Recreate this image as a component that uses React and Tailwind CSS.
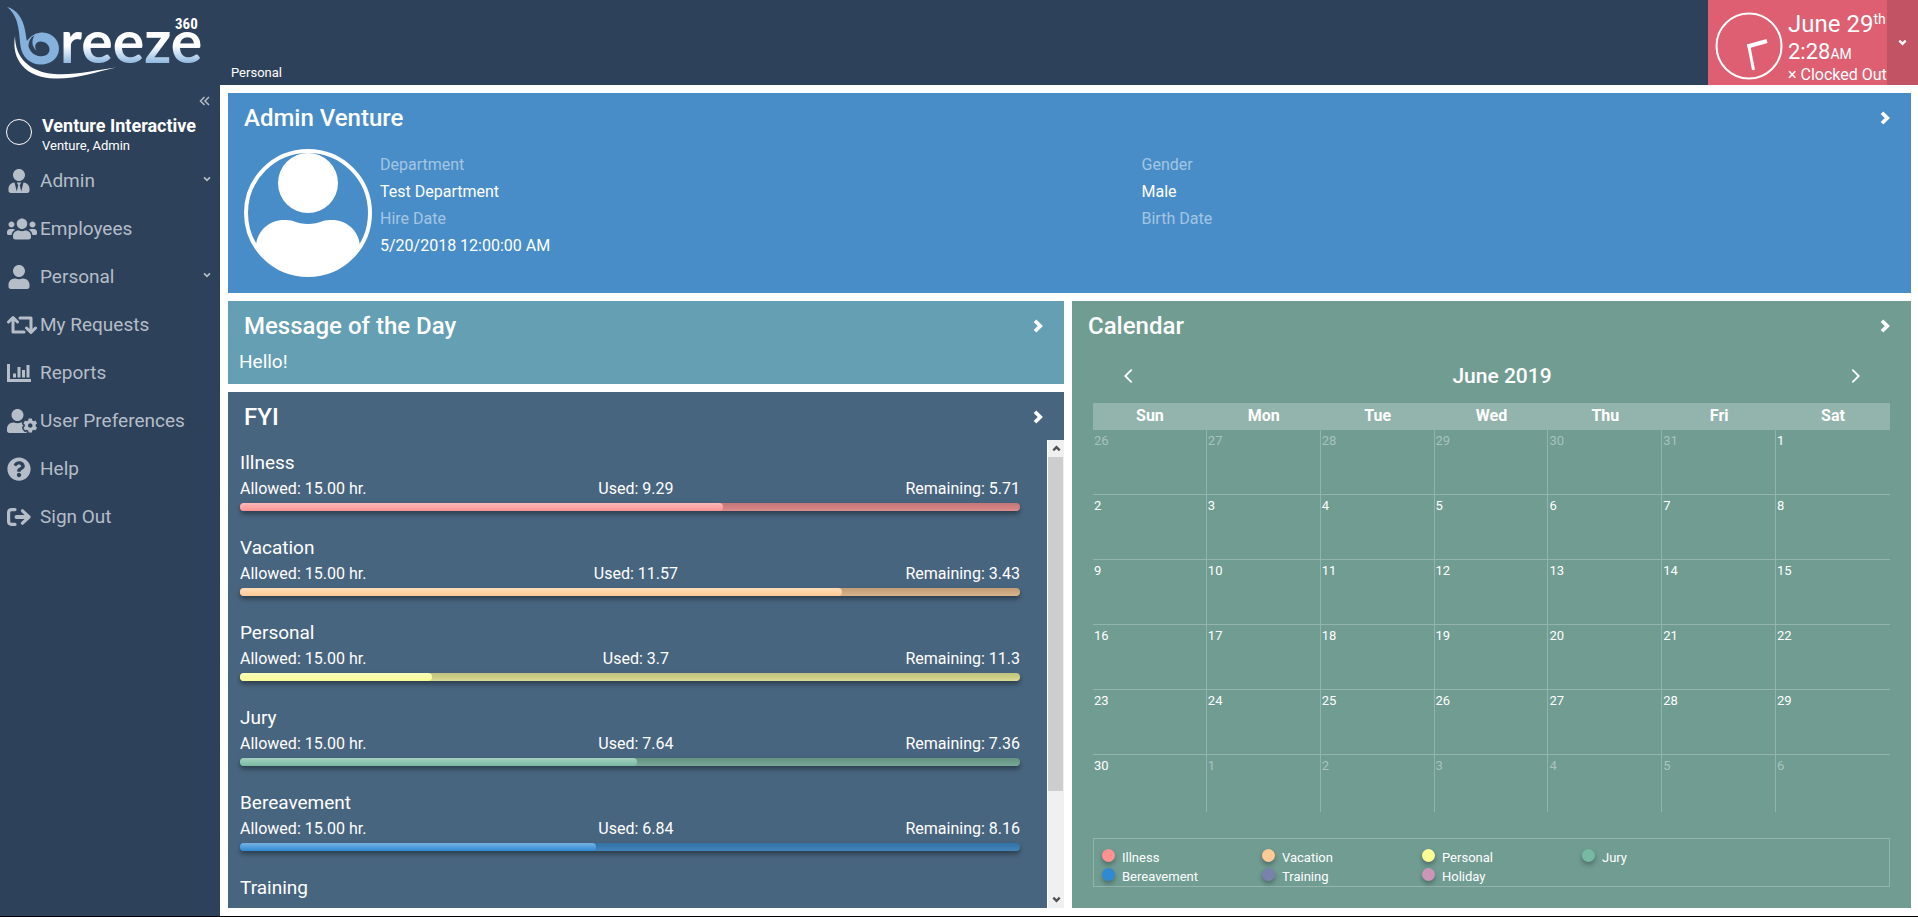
import React from "react";
import { FaUserTie, FaUsers, FaUser, FaUserCog, FaQuestionCircle } from "react-icons/fa";

function Chevron({ dir = "right", className, width = 3 }) {
  const d = {
    right: "M8 5 L15 12 L8 19",
    left: "M16 5 L9 12 L16 19",
    down: "M5 8 L12 15 L19 8",
    up: "M5 16 L12 9 L19 16",
  }[dir];
  return (
    <svg viewBox="0 0 24 24" className={className} fill="none" stroke="currentColor" strokeWidth={width} aria-hidden="true">
      <path d={d} />
    </svg>
  );
}

function RequestsIcon({ className }) {
  return (
    <svg viewBox="0 0 30 24" className={className} fill="none" stroke="currentColor" strokeWidth="3" strokeLinejoin="round" strokeLinecap="round" aria-hidden="true">
      <path d="M1.5 9 L6 4.5 L10.5 9 M6 5 V19 H17" />
      <path d="M13 5 H24 V19 M19.5 15 L24 19.5 L28.5 15" />
    </svg>
  );
}

function ReportsIcon({ className }) {
  return (
    <svg viewBox="0 0 24 24" className={className} fill="currentColor" aria-hidden="true">
      <path d="M0 3 H3 V18 H24 V21 H0 Z" />
      <path d="M6 12.500 H9 V16.500 H6 Z M10.500 6 H13.500 V16.500 H10.500 Z M15 9 H18 V16.500 H15 Z M19.500 4 H22.500 V16.500 H19.500 Z" />
    </svg>
  );
}

function SignOutIcon({ className }) {
  return (
    <svg viewBox="0 0 24 24" className={className} fill="none" stroke="currentColor" strokeWidth="3.200" strokeLinecap="round" strokeLinejoin="round" aria-hidden="true">
      <path d="M8 4.600 H4.500 A3 3 0 0 0 1.600 7.500 V16.500 A3 3 0 0 0 4.500 19.400 H8" />
      <path d="M9.500 12 H21" strokeWidth="4" />
      <path d="M15.500 5.800 L22 12 L15.500 18.200" />
    </svg>
  );
}

const NAV = [
  { label: "Admin", icon: FaUserTie, size: "w-[22px] h-6 ml-px", sub: true },
  { label: "Employees", icon: FaUsers, size: "w-[30px] h-6" },
  { label: "Personal", icon: FaUser, size: "w-[22px] h-6 ml-px", sub: true },
  { label: "My Requests", icon: RequestsIcon, size: "w-[30px] h-6" },
  { label: "Reports", icon: ReportsIcon, size: "w-6 h-6" },
  { label: "User Preferences", icon: FaUserCog, size: "w-[30px] h-6" },
  { label: "Help", icon: FaQuestionCircle, size: "w-6 h-6" },
  { label: "Sign Out", icon: SignOutIcon, size: "w-6 h-6" },
];

const BALANCES = [
  { name: "Illness", allowed: "15.00", used: "9.29", remaining: "5.71", track: "bg-[#dc8587]", fill: "bg-[#ff9393]" },
  { name: "Vacation", allowed: "15.00", used: "11.57", remaining: "3.43", track: "bg-[#d8b086]", fill: "bg-[#ffca93]" },
  { name: "Personal", allowed: "15.00", used: "3.7", remaining: "11.3", track: "bg-[#d8da8d]", fill: "bg-[#fdfd96]" },
  { name: "Jury", allowed: "15.00", used: "7.64", remaining: "7.36", track: "bg-[#72a594]", fill: "bg-[#77b9a2]" },
  { name: "Bereavement", allowed: "15.00", used: "6.84", remaining: "8.16", track: "bg-[#3a80b9]", fill: "bg-[#2f8ad3]" },
  { name: "Training" },
];

const LEGEND = [
  { name: "Illness", color: "bg-[#ff9393]" },
  { name: "Vacation", color: "bg-[#ffca93]" },
  { name: "Personal", color: "bg-[#fdfd96]" },
  { name: "Jury", color: "bg-[#77b9a2]" },
  { name: "Bereavement", color: "bg-[#2f8ad3]" },
  { name: "Training", color: "bg-[#7a82ac]" },
  { name: "Holiday", color: "bg-[#cb97b8]" },
];

const DAYS = ["Sun", "Mon", "Tue", "Wed", "Thu", "Fri", "Sat"];

const WEEKS = [0, 1, 2, 3, 4, 5].map((w) =>
  DAYS.map((_, d) => {
    const n = w * 7 + d - 5;
    if (n < 1) return { n: n + 31, muted: true };
    if (n > 30) return { n: n - 30, muted: true };
    return { n, muted: false };
  })
);

function Logo() {
  return (
    <svg viewBox="0 0 220 85" className="h-[85px] w-[220px] shrink-0" role="img" aria-label="breeze 360">
      <defs>
        <linearGradient id="word" gradientUnits="userSpaceOnUse" x1="0" y1="34" x2="0" y2="63">
          <stop offset="0.4" stopColor="#ffffff" />
          <stop offset="1" stopColor="#8fb8e0" />
        </linearGradient>
      </defs>
      <path
        d="M7 7 C16 9 23 18 25 30 C26 35 26 38 27 41 C31 35 37 32.500 43 32.500 C52 33 59 40 59 48.500 C59 58 51 64.500 41 64.500 C30 64.500 22 57 20.500 46 C19 32 19 16 7 7 Z"
        fill="#85b1dc"
      />
      <path
        d="M36.500 50.500 C33.500 46 36 41.500 40.500 41.500 C46 41.500 49.500 45.500 49.500 49.500 C49.500 54 45.500 56.500 40.500 56.200 C34 56 30 51.500 28.500 46.500 C28.500 41 31 37 34.500 35.500 C31.500 40 31.500 46.500 36.500 50.500 Z"
        fill="#2e415a"
      />
      <path d="M15 36 C15 58 30 72 54 74 C75 75.500 96 70 116 67.500 C96 72 76 79 55 78.500 C26 78 11 60 15 36 Z" fill="#ffffff" />
      <text x="60" y="63" fontFamily="Lato, sans-serif" fontSize="59" fontWeight="700" fill="url(#word)">reeze</text>
      <text x="175" y="29" fontFamily="'Liberation Sans Narrow', 'Roboto Condensed', Roboto, sans-serif" fontSize="15" fontWeight="700" fill="#ffffff">360</text>
    </svg>
  );
}

function CardHeader({ title }) {
  return (
    <div className="flex h-12 items-center justify-between pt-0.5 pl-4 pr-[17px]">
      <h2 className="text-2xl leading-8 font-medium">{title}</h2>
      <button type="button" aria-label={"Open " + title} className="flex">
        <Chevron className="size-[18px]" width={5} />
      </button>
    </div>
  );
}

function Sidebar() {
  return (
    <aside className="flex w-[220px] shrink-0 flex-col bg-[#2e415a]">
      <button type="button" aria-label="Collapse menu" className="mt-2 mr-[9px] flex h-4 self-end text-[#b5bcc6]">
        <svg viewBox="0 0 12 16" className="h-4 w-3" fill="none" stroke="currentColor" strokeWidth="1.500" aria-hidden="true">
          <path d="M5.500 4 L1.500 8 L5.500 12 M10 4 L6 8 L10 12" />
        </svg>
      </button>
      <div className="flex items-start pt-[5px] pl-1.5 text-white">
        <span className="mt-[5px] size-[26px] shrink-0 rounded-full border border-white" />
        <div className="pl-[10px]">
          <div className="text-lg leading-6 font-bold">Venture Interactive</div>
          <div className="text-[13px] leading-4">Venture, Admin</div>
        </div>
      </div>
      <nav className="flex flex-col pt-[3px]">
        {NAV.map(({ label, icon: Icon, size, sub }) => (
          <a key={label} href="#" className="flex h-12 items-center pl-[7px] text-[#b5bdc8]">
            <span className="flex w-[33px] shrink-0">
              <Icon className={size} />
            </span>
            <span className="grow text-[19px] leading-6">{label}</span>
            {sub && <Chevron dir="down" className="mr-2 mb-1 size-[10px]" width={4} />}
          </a>
        ))}
      </nav>
    </aside>
  );
}

function Profile() {
  return (
    <section className="h-[200px] bg-[#488dc8]">
      <CardHeader title="Admin Venture" />
      <div className="flex gap-2 pt-2 pl-4 pr-2">
        <svg viewBox="0 0 128 128" className="size-32 shrink-0" role="img" aria-label="Profile picture">
          <defs>
            <clipPath id="disc">
              <circle cx="64" cy="64" r="63" />
            </clipPath>
          </defs>
          <circle cx="64" cy="64" r="62" fill="none" stroke="#fff" strokeWidth="4" />
          <circle cx="64" cy="34" r="30" fill="#fff" />
          <path clipPath="url(#disc)" fill="#fff" d="M12 97 C13 81 26 71 40 71 C43 71 47 71 49 72 C58 76 70 76 79 72 C81 71 85 71 88 71 C102 71 115 81 116 97 V128 H12 Z" />
        </svg>
        <dl className="grid grow grid-cols-2 content-start pt-0.5 text-base leading-[27px]">
          <div>
            <dt className="text-white/50">Department</dt>
            <dd>Test Department</dd>
            <dt className="text-white/50">Hire Date</dt>
            <dd>5/20/2018 12:00:00 AM</dd>
          </div>
          <div>
            <dt className="text-white/50">Gender</dt>
            <dd>Male</dd>
            <dt className="text-white/50">Birth Date</dt>
          </div>
        </dl>
      </div>
    </section>
  );
}

function Balance({ item }) {
  return (
    <li className="pb-6">
      <h3 className="text-[19px] leading-[26px]">{item.name}</h3>
      {item.used && (
        <>
          <div className="flex justify-between text-base leading-[26px]">
            <span>Allowed: {item.allowed} hr.</span>
            <span>Used: {item.used}</span>
            <span>Remaining: {item.remaining}</span>
          </div>
          <div className={"mt-px h-2 rounded bg-linear-to-b from-black/10 to-white/5 shadow-[0_3px_5px_rgba(0,0,0,0.4)] " + item.track}>
            <div
              className={"h-2 rounded bg-linear-to-b from-white/35 to-white/0 " + item.fill}
              style={{ width: (Number(item.used) / Number(item.allowed)) * 100 + "%" }}
            />
          </div>
        </>
      )}
    </li>
  );
}

function Fyi() {
  return (
    <section className="flex grow flex-col bg-[#48657f]">
      <CardHeader title="FYI" />
      <div className="flex h-0 grow">
        <ul className="grow overflow-hidden pt-[10px] pr-[27px] pl-3">
          {BALANCES.map((item) => (
            <Balance key={item.name} item={item} />
          ))}
        </ul>
        <div className="flex w-[17px] shrink-0 flex-col items-center border-l border-white bg-[#f0f0f0] text-[#505050]">
          <span className="flex h-[17px] items-center"><Chevron dir="up" className="size-[11px]" width={5} /></span>
          <div className="w-full grow">
            <div className="mr-px h-[77%] bg-[#cdcdcd]" />
          </div>
          <span className="flex h-[17px] items-center"><Chevron dir="down" className="size-[11px]" width={5} /></span>
        </div>
      </div>
    </section>
  );
}

function Calendar() {
  return (
    <section className="flex flex-col bg-[#709c92]">
      <CardHeader title="Calendar" />
      <div className="px-[21px] pb-[21px]">
        <div className="flex h-[54px] items-center justify-between pr-[23px] pl-6">
          <button type="button" aria-label="Previous month" className="flex"><Chevron dir="left" className="size-[22px]" width={2} /></button>
          <h3 className="pl-5 text-[21px] leading-6 font-medium">June 2019</h3>
          <button type="button" aria-label="Next month" className="flex"><Chevron className="size-[22px]" width={2} /></button>
        </div>
        <table className="w-full table-fixed border-separate border-spacing-0">
          <thead>
            <tr className="h-[27px] bg-[#93b4ad]">
              {DAYS.map((d) => (
                <th key={d} className="p-0 pb-0.5 text-base leading-[25px] font-bold">{d}</th>
              ))}
            </tr>
          </thead>
          <tbody>
            {WEEKS.map((week, w) => (
              <tr key={w} className={w < 5 ? "h-[65px]" : "h-[57px]"}>
                {week.map((day, d) => (
                  <td
                    key={d}
                    className={
                      "border-[#93b4ad] p-0 pt-[3px] pl-px align-top text-[13px] leading-4 " +
                      (w < 5 ? "border-b " : "") +
                      (d < 6 ? "border-r " : "") +
                      (day.muted ? "text-white/40" : "")
                    }
                  >
                    {day.n}
                  </td>
                ))}
              </tr>
            ))}
          </tbody>
        </table>
        <ul className="mt-[26px] flex flex-wrap border border-[#93b4ad] pt-[9px] pr-[140px] pl-2">
          {LEGEND.map((l) => (
            <li key={l.name} className="flex h-[19px] w-40 items-center gap-[7px] text-[13px] leading-[19px]">
              <span className={"mb-1 size-[13px] rounded-full shadow-[0_3px_5px_rgba(0,0,0,0.3)] " + l.color} />
              {l.name}
            </li>
          ))}
        </ul>
      </div>
    </section>
  );
}

export default function App() {
  return (
    <div className="flex min-h-screen flex-col border-b border-black bg-white font-['Roboto',sans-serif] text-white">
      <header className="flex h-[85px] bg-[#2e415a]">
        <Logo />
        <div className="flex grow items-end pb-[3px] pl-[11px] text-[13px] leading-[18px]">Personal</div>
        <div className="flex w-[179px] shrink-0 items-center gap-[5px] bg-[#dd5f71] pl-[7px]">
          <svg viewBox="0 0 68 68" className="mt-1.5 size-[68px] shrink-0" fill="none" stroke="#fff" role="img" aria-label="Clock">
            <circle cx="34" cy="34" r="32.500" strokeWidth="2" />
            <path d="M32.500 34.500 L52 29" strokeWidth="4" />
            <path d="M33.500 32 L38.500 58" strokeWidth="3" />
          </svg>
          <div className="pt-[9px] whitespace-nowrap">
            <div className="h-7 text-2xl leading-[29px]">June 29<sup className="top-[-8px] text-sm leading-none">th</sup></div>
            <div className="h-[27px] text-[22px] leading-[27px]">2:28<span className="text-sm">AM</span></div>
            <div className="text-base leading-5">× Clocked Out</div>
          </div>
        </div>
        <button type="button" aria-label="Clock options" className="flex w-[31px] shrink-0 items-center justify-center bg-[#c25364]">
          <Chevron dir="down" className="size-[11px]" width={5} />
        </button>
      </header>
      <div className="flex grow">
        <Sidebar />
        <main className="flex grow flex-col gap-2 py-2 pr-[7px] pl-2">
          <Profile />
          <div className="grid grow grid-cols-[836fr_839fr] gap-2">
            <div className="flex flex-col gap-2">
              <section className="h-[83px] bg-[#649fb3]">
                <CardHeader title="Message of the Day" />
                <p className="pl-[11px] text-[19px] leading-[26px]">Hello!</p>
              </section>
              <Fyi />
            </div>
            <Calendar />
          </div>
        </main>
      </div>
    </div>
  );
}
